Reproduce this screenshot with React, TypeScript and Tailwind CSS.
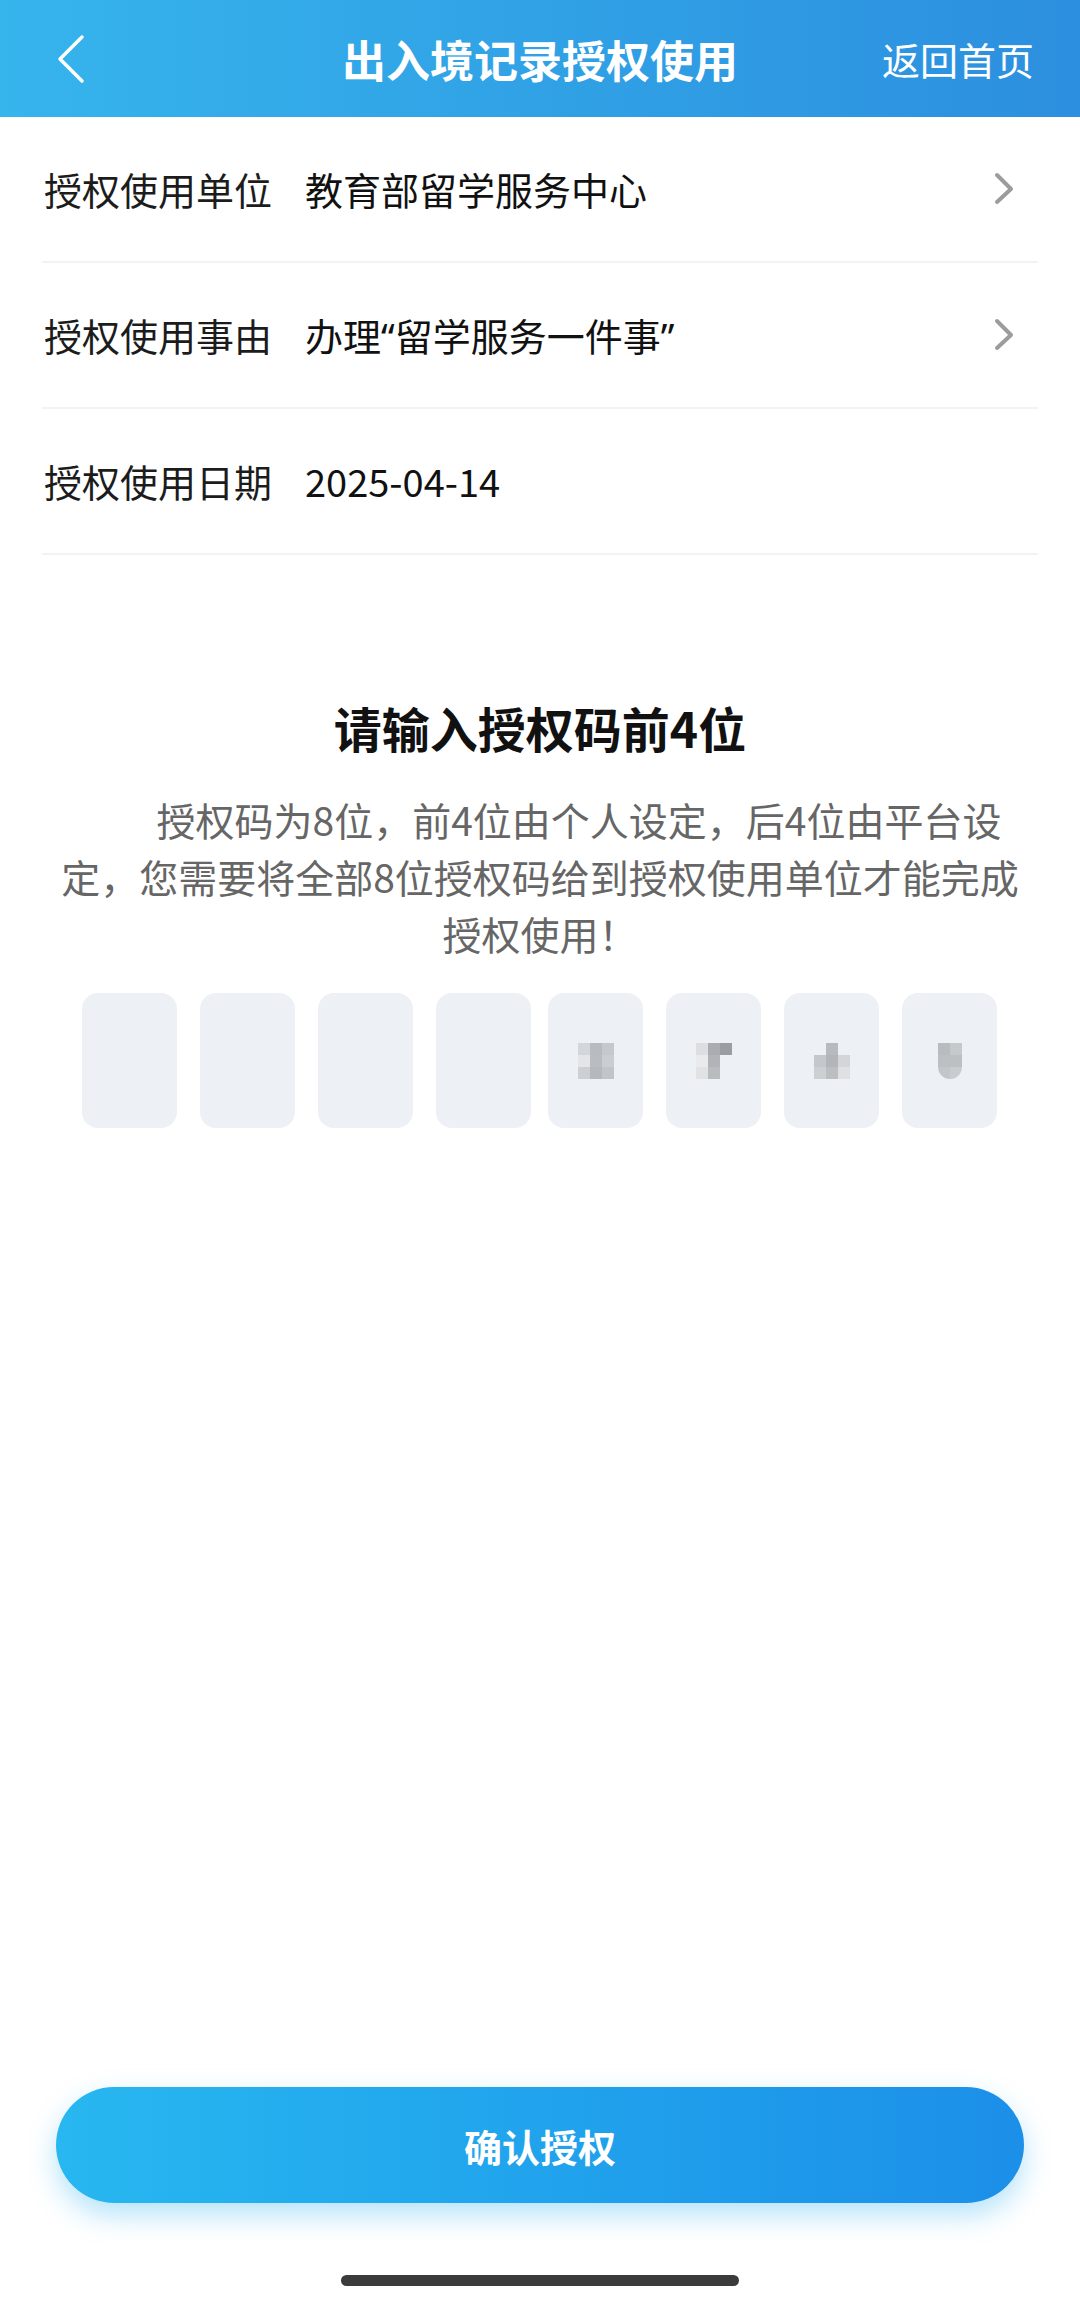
import React from 'react';

const FONT = '"Noto Sans CJK SC", "Noto Sans", sans-serif';

// quotes in the reference are narrow latin ones, not full width
const Q = ({ c }: { c: string }) => <span style={{ fontFamily: '"Noto Sans", sans-serif' }}>{c}</span>;

const ROWS: { label: string; value: React.ReactNode; arrow: boolean }[] = [
  { label: '授权使用单位', value: '教育部留学服务中心', arrow: true },
  {
    label: '授权使用事由',
    value: (
      <>
        办理<Q c="“" />留学服务一件事<Q c="”" />
      </>
    ),
    arrow: true,
  },
  { label: '授权使用日期', value: '2025-04-14', arrow: false },
];

// pixelated (mosaic) digits shown in the last four boxes
type Cell = string | null;
const MOSAICS: { cols: number; cells: Cell[]; round?: boolean }[] = [
  { cols: 3, cells: ['#d3d6da', '#b8bbbf', '#c6c9cc', '#e3e5e8', '#b9bcc0', '#cbced1', '#cdd0d3', '#b5b8bc', '#c2c5c8'] },
  { cols: 3, cells: ['#dcdee1', '#a9acb0', '#9a9da2', '#e8eaec', '#b0b3b7', null, '#e0e2e4', '#b9bcbf', null] },
  { cols: 3, cells: [null, '#b7babe', null, '#c4c7cb', '#b2b5b9', '#d3d6d9', '#cdd0d3', '#bcbfc2', '#dee0e2'] },
  { cols: 2, cells: ['#b8bbbf', '#c6c9cc', '#bcbfc3', '#bdc0c3', '#c3c6c9', '#c9ccce'], round: true },
];

function BackIcon() {
  return (
    <svg width="30" height="52" viewBox="0 0 30 52" fill="none" className="ml-[56px]">
      <polyline points="26,4 4,26 26,48" stroke="white" strokeWidth="3.5" strokeLinecap="round" strokeLinejoin="round" />
    </svg>
  );
}

function RowArrow() {
  return (
    <svg width="22" height="34" viewBox="0 0 22 34" fill="none">
      <polyline points="3,3 17,17 3,30" stroke="#9c9c9c" strokeWidth="4" strokeLinecap="round" strokeLinejoin="round" />
    </svg>
  );
}

function Mosaic({ cols, cells, round }: { cols: number; cells: Cell[]; round?: boolean }) {
  return (
    <div
      className={`grid ${cols === 3 ? 'grid-cols-[12px_12px_12px]' : 'grid-cols-[12px_12px]'} overflow-hidden blur-[0.6px] ${round ? 'rounded-b-[12px]' : ''}`}
    >
      {cells.map((c, i) => (
        <div key={i} className="w-[12px] h-[12px]" style={{ backgroundColor: c ?? 'transparent' }} />
      ))}
    </div>
  );
}

function CodeBox({ mosaic }: { mosaic?: (typeof MOSAICS)[number] }) {
  return (
    <div className="w-[95px] h-[135px] rounded-[16px] bg-[#edf0f5] flex items-center justify-center">
      {mosaic && <Mosaic {...mosaic} />}
    </div>
  );
}

export default function App() {
  return (
    <div className="w-[1080px] h-[2301px] bg-white flex flex-col" style={{ fontFamily: FONT }}>
      <header className="h-[117px] shrink-0 grid grid-cols-[1fr_auto_1fr] items-center bg-gradient-to-r from-[#36b4ec] to-[#2c8fdf]">
        <div className="flex items-center">
          <BackIcon />
        </div>
        <h1 className="text-white text-[44px] font-bold leading-none">出入境记录授权使用</h1>
        <div className="justify-self-end mr-[46px] text-white text-[38px] leading-none">返回首页</div>
      </header>

      <div className="mx-[42px]">
        {ROWS.map(row => (
          <div key={row.label} className="h-[146px] flex items-center border-b-2 border-[#f3f3f3] pl-[2px] pr-[22px]">
            <span className="w-[261px] shrink-0 text-[38px] leading-none text-[#1c1c1c]">{row.label}</span>
            <span className="flex-1 text-[38px] leading-none text-[#111]">{row.value}</span>
            {row.arrow && <RowArrow />}
          </div>
        ))}
      </div>

      <h2 className="mt-[142px] text-center text-[48px] leading-[60px] font-bold text-[#111]">请输入授权码前4位</h2>

      <p className="mt-[34px] w-[975px] mx-auto text-center indent-[2em] text-[39px] leading-[57px] text-[#666]">
        授权码为8位，前4位由个人设定，后4位由平台设定，您需要将全部8位授权码给到授权使用单位才能完成授权使用！
      </p>

      <div className="mt-[31px] ml-[82px] flex gap-[17px]">
        <div className="flex gap-[23px]">
          {[0, 1, 2, 3].map(i => (
            <CodeBox key={i} />
          ))}
        </div>
        <div className="flex gap-[23px]">
          {MOSAICS.map((m, i) => (
            <CodeBox key={i} mosaic={m} />
          ))}
        </div>
      </div>

      <div className="flex-1" />

      <button className="mx-[56px] h-[116px] rounded-full bg-gradient-to-r from-[#28b7f0] to-[#1c8fe8] text-white text-[38px] font-bold shadow-[0_12px_28px_rgba(40,175,240,0.35)]">
        确认授权
      </button>

      <div className="h-[98px] shrink-0 flex items-end justify-center pb-[15px]">
        <div className="w-[398px] h-[11px] rounded-full bg-[#3b3b3b]" />
      </div>
    </div>
  );
}
